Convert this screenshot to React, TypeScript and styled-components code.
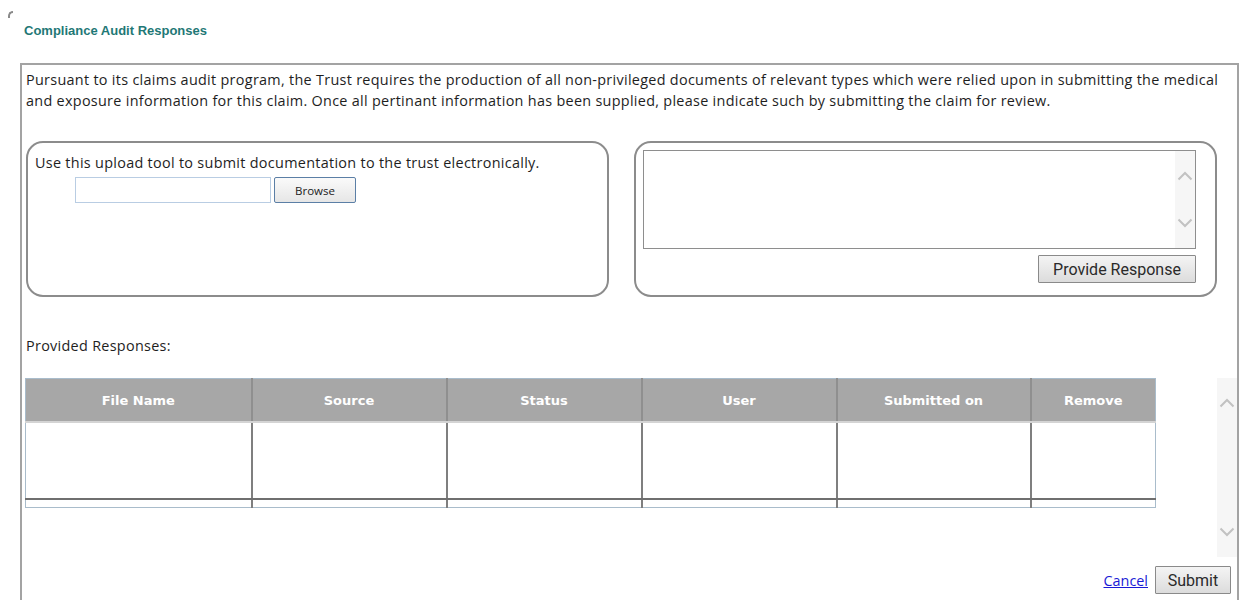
import styled, { createGlobalStyle } from "styled-components";

interface ChevronProps {
  $dir: "up" | "down";
}
interface ScrollStripProps {
  $height: number;
}

const GlobalStyle = createGlobalStyle`
  html, body {
    margin: 0;
    padding: 0;
    background: #ffffff;
  }
  body {
    font-family: "Open Sans", "Noto Sans", Arial, sans-serif;
    color: #1e1e1e;
  }
`;

const Page = styled.div`
  width: 1243px;
  height: 600px;
  overflow: hidden;
  padding-top: 11px;
  box-sizing: border-box;
`;

const CornerMark = styled.div`
  margin-left: 8px;
  width: 5px;
  height: 7px;
  border-left: 2px solid #8a8a8a;
  border-top: 2px solid #8a8a8a;
  border-top-left-radius: 5px;
  box-sizing: border-box;
`;

const Title = styled.h1`
  margin: 5px 0 0 24px;
  font-family: "Liberation Sans", Arial, sans-serif;
  font-size: 13px;
  line-height: 16px;
  font-weight: 700;
  color: #1f7876;
`;

const Frame = styled.div`
  margin: 24px 0 0 20px;
  width: 1219px;
  height: 600px;
  box-sizing: border-box;
  border: 2px solid #a3a3a3;
  border-bottom: none;
  padding: 4px 0 0 4px;
`;

const BodyText = styled.div`
  font-size: 14.4px;
  letter-spacing: 0.3px;
  line-height: 21px;
`;

const Intro = styled(BodyText)`
  padding-right: 12px;
`;

const Panels = styled.div`
  margin-top: 30px;
  display: flex;
  gap: 25px;
`;

const Panel = styled.div`
  width: 583px;
  height: 156px;
  box-sizing: border-box;
  border: 2px solid #8c8c8c;
  border-radius: 17px;
`;

const UploadPanel = styled(Panel)`
  padding: 9px 0 0 7px;
`;

const UploadRow = styled.div`
  margin: 4px 0 0 40px;
  display: flex;
  gap: 3px;
`;

const FileInput = styled.div`
  width: 196px;
  height: 26px;
  box-sizing: border-box;
  border: 1px solid #b9cde3;
  background: #fff;
`;

const BrowseButton = styled.button`
  width: 82px;
  height: 26px;
  box-sizing: border-box;
  border: 1px solid #5b7fa6;
  border-radius: 2px;
  background: linear-gradient(#fafafa, #e6e6e6);
  font-family: "Open Sans", "Noto Sans", Arial, sans-serif;
  font-size: 11.5px;
  color: #222;
  padding: 0;
`;

const ResponsePanel = styled(Panel)`
  padding: 7px 19px 0 7px;
  display: flex;
  flex-direction: column;
  align-items: flex-end;
`;

const ResponseBox = styled.div`
  width: 553px;
  height: 99px;
  box-sizing: border-box;
  border: 1px solid #8e8e8e;
  display: flex;
  justify-content: flex-end;
`;

const ScrollStrip = styled.div`
  width: 20px;
  height: ${(props: ScrollStripProps) => props.$height}px;
  background: #f6f6f6;
  display: flex;
  flex-direction: column;
  justify-content: space-between;
  align-items: center;
  padding: 20px 0;
  box-sizing: border-box;
`;

const GreyButton = styled.button`
  height: 28px;
  box-sizing: border-box;
  border: 1px solid #8a8a8a;
  border-radius: 1px;
  background: linear-gradient(#f4f4f4, #dcdcdc);
  font-family: Roboto, "Liberation Sans", Arial, sans-serif;
  font-size: 16px;
  color: #2a2a2a;
  padding: 0;
`;

const ProvideButton = styled(GreyButton)`
  margin-top: 6px;
  width: 158px;
`;

const SectionLabel = styled(BodyText)`
  margin-top: 38px;
`;

const GridRow = styled.div`
  margin: 22px 0 0 -1px;
  display: flex;
  justify-content: space-between;
  align-items: flex-start;
`;

const ResponsesTable = styled.table`
  width: 1130px;
  border-collapse: collapse;
  table-layout: fixed;
  border: 1px solid #a9bccb;
`;

const HeadCell = styled.th`
  height: 42px;
  padding: 0;
  background: #a7a7a7;
  border-left: 2px solid #8f8f8f;
  border-bottom: 2px solid #d4d4d4;
  font-family: "DejaVu Sans", Verdana, sans-serif;
  font-size: 13px;
  font-weight: 700;
  color: #ffffff;
  text-align: center;

  &:first-child {
    border-left: none;
  }
`;

const BodyCell = styled.td`
  height: 75px;
  padding: 0;
  border-left: 2px solid #7f7f7f;
  border-bottom: 2px solid #6f6f6f;

  &:first-child {
    border-left: 1px solid #a9bccb;
  }
`;

const FooterCell = styled.td`
  height: 7px;
  padding: 0;
  border-left: 2px solid #7f7f7f;

  &:first-child {
    border-left: 1px solid #a9bccb;
  }
`;

const Actions = styled.div`
  margin-top: 9px;
  padding-right: 6px;
  display: flex;
  justify-content: flex-end;
  align-items: center;
  gap: 7px;
`;

const CancelLink = styled.a`
  font-size: 14.4px;
  color: #1a1ad6;
  text-decoration: underline;
  cursor: pointer;
`;

const SubmitButton = styled(GreyButton)`
  width: 76px;
`;

const Chevron = ({ $dir }: ChevronProps) => (
  <svg width="16" height="10" viewBox="0 0 16 10">
    <path
      d={$dir === "up" ? "M1.5 8.5 L8 2 L14.5 8.5" : "M1.5 1.5 L8 8 L14.5 1.5"}
      fill="none"
      stroke="#c2c2c2"
      strokeWidth="2"
    />
  </svg>
);

const columns = ["File Name", "Source", "Status", "User", "Submitted on", "Remove"];
const widths = [226, 195, 195, 195, 194, 125];

export default function App() {
  return (
    <Page>
      <GlobalStyle />
      <CornerMark />
      <Title>Compliance Audit Responses</Title>

      <Frame>
        <Intro>
          Pursuant to its claims audit program, the Trust requires the production of all non-privileged documents of
          relevant types which were relied upon in submitting the medical and exposure information for this claim. Once
          all pertinant information has been supplied, please indicate such by submitting the claim for review.
        </Intro>

        <Panels>
          <UploadPanel>
            <BodyText>Use this upload tool to submit documentation to the trust electronically.</BodyText>
            <UploadRow>
              <FileInput />
              <BrowseButton>Browse</BrowseButton>
            </UploadRow>
          </UploadPanel>

          <ResponsePanel>
            <ResponseBox>
              <ScrollStrip $height={97}>
                <Chevron $dir="up" />
                <Chevron $dir="down" />
              </ScrollStrip>
            </ResponseBox>
            <ProvideButton>Provide Response</ProvideButton>
          </ResponsePanel>
        </Panels>

        <SectionLabel>Provided Responses:</SectionLabel>

        <GridRow>
          <ResponsesTable>
            <colgroup>
              {widths.map((w, i) => (
                <col key={i} style={{ width: w }} />
              ))}
            </colgroup>
            <thead>
              <tr>
                {columns.map((c) => (
                  <HeadCell key={c}>{c}</HeadCell>
                ))}
              </tr>
            </thead>
            <tbody>
              <tr>
                {columns.map((c) => (
                  <BodyCell key={c} />
                ))}
              </tr>
              <tr>
                {columns.map((c) => (
                  <FooterCell key={c} />
                ))}
              </tr>
            </tbody>
          </ResponsesTable>
          <ScrollStrip $height={179}>
            <Chevron $dir="up" />
            <Chevron $dir="down" />
          </ScrollStrip>
        </GridRow>

        <Actions>
          <CancelLink>Cancel</CancelLink>
          <SubmitButton>Submit</SubmitButton>
        </Actions>
      </Frame>
    </Page>
  );
}
